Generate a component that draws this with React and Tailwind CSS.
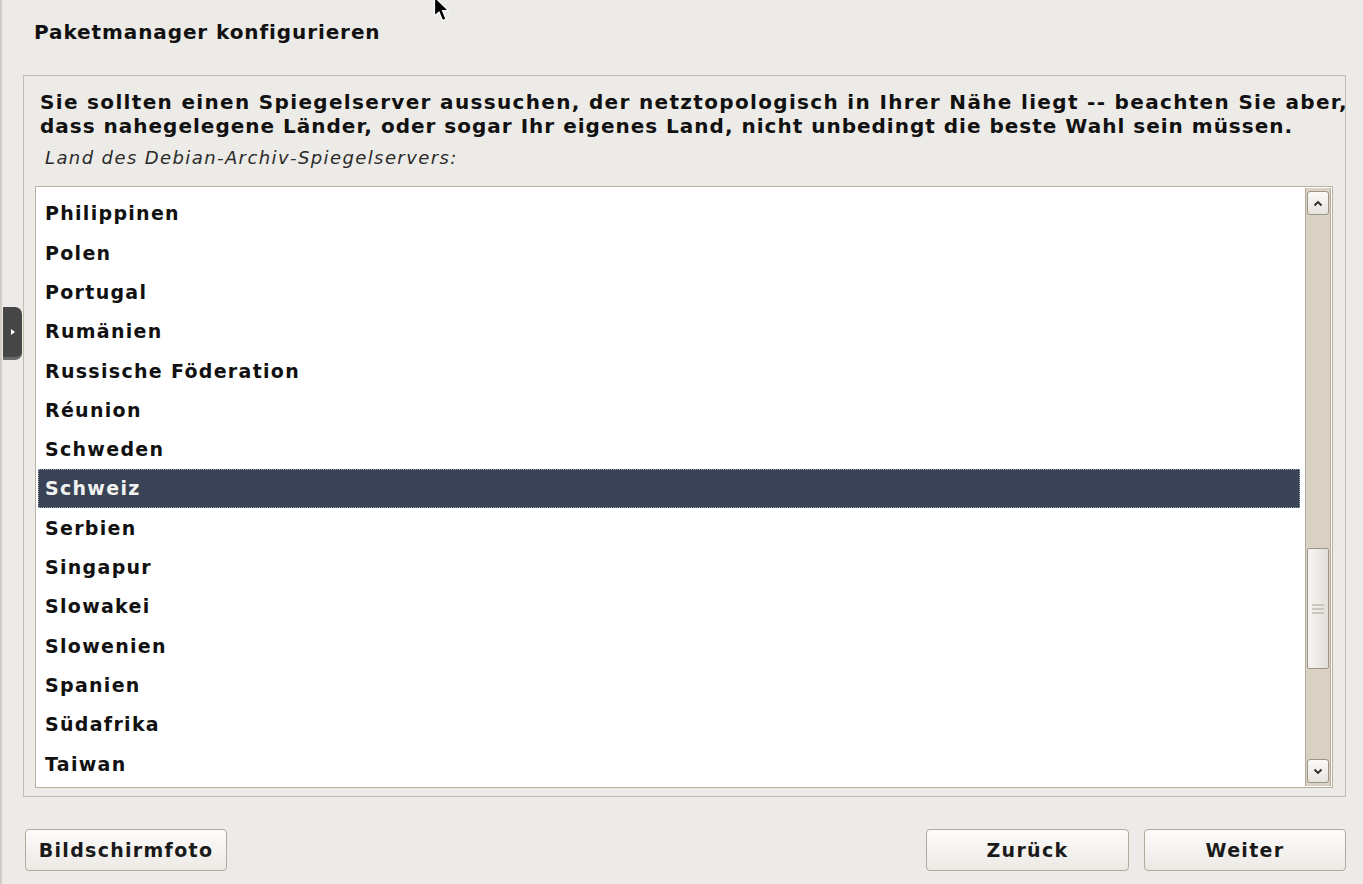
const COUNTRIES = [
  'Philippinen',
  'Polen',
  'Portugal',
  'Rumänien',
  'Russische Föderation',
  'Réunion',
  'Schweden',
  'Schweiz',
  'Serbien',
  'Singapur',
  'Slowakei',
  'Slowenien',
  'Spanien',
  'Südafrika',
  'Taiwan',
];

const SELECTED = 'Schweiz';

function Cursor() {
  return (
    <svg className="absolute left-[430px] top-[-4px]" width="20" height="28" viewBox="0 0 20 28">
      <path d="M2.5 1 L2.5 20 L7 16 L10.5 24.5 L14 23 L10.5 14.5 L16.5 14.5 Z" fill="#000" stroke="#fff" strokeWidth="1.2" />
    </svg>
  );
}

function ScrollArrow({ up }) {
  return (
    <div className="h-[24px] mx-[1px] rounded-[3px] border border-[#9d9585] bg-gradient-to-b from-[#fbfaf9] to-[#e8e4df] flex items-center justify-center">
      <svg width="10" height="7" viewBox="0 0 10 7">
        <path d={up ? 'M1.5 5.5 L5 2 L8.5 5.5' : 'M1.5 1.5 L5 5 L8.5 1.5'} fill="none" stroke="#2b2b2b" strokeWidth="1.8" />
      </svg>
    </div>
  );
}

function Scrollbar() {
  return (
    <div className="w-[26px] h-full flex flex-col bg-[#d9d1c4] border-x border-[#b3aa99] py-[3px]">
      <ScrollArrow up />
      <div className="flex-1 flex flex-col pt-[333px]">
        <div className="h-[121px] mx-[1px] rounded-[2px] border border-[#9d9585] bg-gradient-to-r from-[#f5f3f1] via-[#eeebe8] to-[#e2ded9] flex flex-col items-center justify-center gap-[2px]">
          <div className="w-[12px] h-[2px] bg-[#cdc6bb]" />
          <div className="w-[12px] h-[2px] bg-[#cdc6bb]" />
          <div className="w-[12px] h-[2px] bg-[#cdc6bb]" />
        </div>
      </div>
      <ScrollArrow />
    </div>
  );
}

function Button({ children, className = '' }) {
  return (
    <button
      className={`h-[42px] rounded-[4px] border border-[#b2aa9b] bg-gradient-to-b from-[#fdfcfb] to-[#ece9e5] text-[19px] font-bold tracking-[1.3px] text-[#1a1a1a] ${className}`}
    >
      {children}
    </button>
  );
}

export default function App() {
  return (
    <div
      className="relative w-[1363px] h-[884px] overflow-hidden bg-[#edebe7] text-[#111] border-l-[2px] border-[#d2cdc4]"
      style={{ fontFamily: '"DejaVu Sans", "Liberation Sans", sans-serif' }}
    >
      <Cursor />

      <div className="h-[64px] pl-[32px] pt-[20px] text-[20px] font-bold tracking-[0.9px] leading-[24px]">
        Paketmanager konfigurieren
      </div>

      <div className="ml-[21px] mt-[11px] w-[1323px] h-[722px] border border-[#c4bcae] flex flex-col">
        <div className="pl-[16px] pt-[14px] text-[20px] font-bold leading-[24px] whitespace-nowrap">
          <p className="tracking-[1.33px]">
            Sie sollten einen Spiegelserver aussuchen, der netztopologisch in Ihrer Nähe liegt -- beachten Sie aber,
          </p>
          <p className="tracking-[1px]">
            dass nahegelegene Länder, oder sogar Ihr eigenes Land, nicht unbedingt die beste Wahl sein müssen.
          </p>
        </div>
        <div className="pl-[21px] pt-[9px] text-[18px] italic tracking-[1.4px] leading-[22px] text-[#2a2a2a]">
          Land des Debian-Archiv-Spiegelservers:
        </div>

        <div className="ml-[11px] mt-[17px] w-[1298px] h-[602px] border border-[#b9b09f] bg-white flex">
          <div className="flex-1 pt-[7px] pl-[2px] pr-[5px]">
            {COUNTRIES.map((c) =>
              c === SELECTED ? (
                <div
                  key={c}
                  className="h-[39.3px] flex items-center pl-[7px] bg-[#3a4355] text-[#f2f2f2] outline outline-1 outline-dotted outline-[#9aa3b5] -outline-offset-1 text-[19px] font-bold tracking-[1.3px]"
                >
                  {c}
                </div>
              ) : (
                <div key={c} className="h-[39.3px] flex items-center pl-[7px] text-[19px] font-bold tracking-[1.3px]">
                  {c}
                </div>
              )
            )}
          </div>
          <div className="pr-[1px] py-[1px]">
            <Scrollbar />
          </div>
        </div>
      </div>

      <div className="flex items-center mt-[32px] pl-[23px] pr-[17px]">
        <Button className="w-[202px]">Bildschirmfoto</Button>
        <div className="flex-1" />
        <Button className="w-[203px]">Zurück</Button>
        <Button className="w-[202px] ml-[15px] border-[#8c8475]">Weiter</Button>
      </div>

      <div className="absolute left-[1px] top-[307px] w-[19px] h-[53px] rounded-r-[7px] bg-[#464646] border-b-[3px] border-[#6b6b6b] flex items-center justify-center">
        <svg width="6" height="8" viewBox="0 0 6 8">
          <path d="M1 1 L5 4 L1 7 Z" fill="#fff" />
        </svg>
      </div>
    </div>
  );
}
